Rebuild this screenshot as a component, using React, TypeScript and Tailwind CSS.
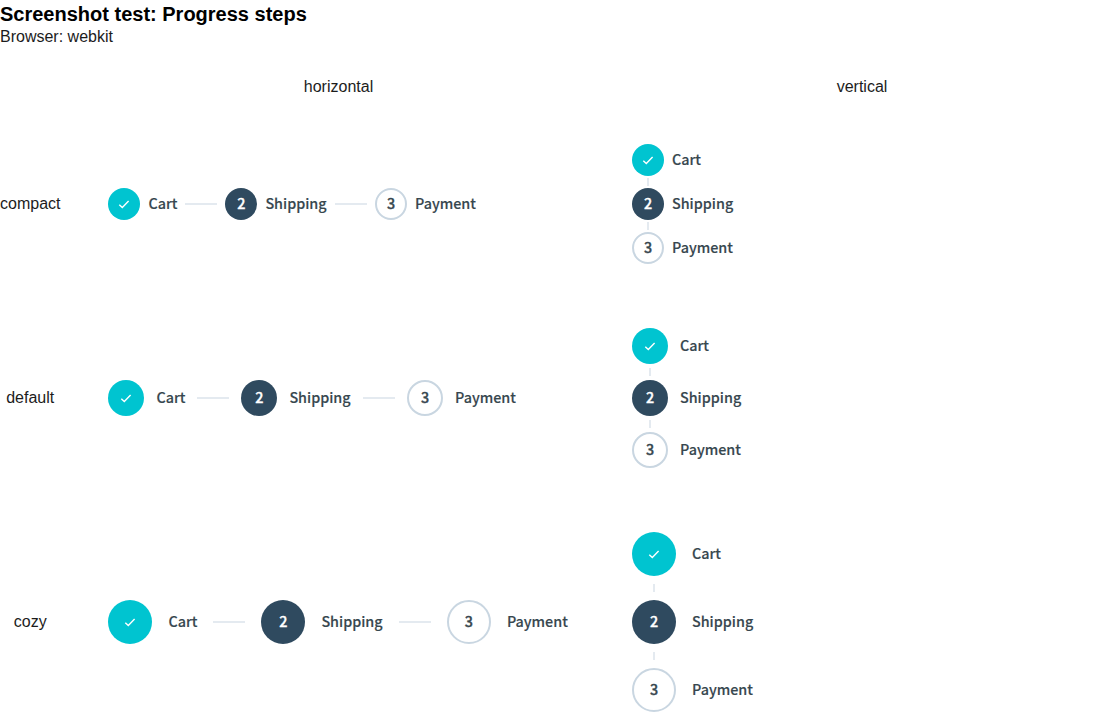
import { Fragment } from "react";

type Size = "compact" | "default" | "cozy";

const sizes: Record<Size, { circle: string; gap: string; connector: string; row: string }> = {
  compact: { circle: "size-8", gap: "gap-2", connector: "w-8 my-0.5", row: "h-[120px]" },
  default: { circle: "size-9", gap: "gap-3", connector: "w-9 my-1", row: "h-[140px]" },
  cozy: { circle: "size-11", gap: "gap-4", connector: "w-11 my-2", row: "h-[180px]" },
};

const steps = [
  { label: "Cart", width: "w-[29px]" },
  { label: "Shipping", width: "w-[61.6px]" },
  { label: "Payment", width: "w-[61.6px]" },
];

const tones = [
  "bg-[#00c4d0] text-white",
  "bg-[#2f4a5f] text-white",
  "border-2 border-[#c9d6e1] bg-white text-[#37474f]",
];

const stepFont =
  "font-['Noto_Sans_CJK_SC',sans-serif] text-[14.35px] leading-6 font-medium [-webkit-text-stroke:0.15px_currentColor]";

function Marker({ index, size }: { index: number; size: Size }) {
  return (
    <div className={`flex shrink-0 items-center justify-center rounded-full ${stepFont} ${sizes[size].circle} ${tones[index]}`}>
      {index === 0 ? (
        <svg viewBox="0 0 16 16" className="size-4" fill="none" stroke="currentColor" strokeWidth="1.4">
          <path d="M3.3 8.7 6.3 11.6 12.6 5" />
        </svg>
      ) : (
        <span className="pb-0.5 [-webkit-text-stroke:0.35px_currentColor]">{index + 1}</span>
      )}
    </div>
  );
}

function Label({ index }: { index: number }) {
  return (
    <span className={`pb-0.5 whitespace-nowrap text-[#37474f] ${stepFont} ${steps[index].width}`}>
      {steps[index].label}
    </span>
  );
}

function HorizontalSteps({ size }: { size: Size }) {
  return (
    <div className={`flex items-center ${sizes[size].gap}`}>
      {steps.map((step, i) => (
        <Fragment key={step.label}>
          {i > 0 && <div className="h-0.5 w-8 shrink-0 bg-[#e4eaf0]" />}
          <Marker index={i} size={size} />
          <Label index={i} />
        </Fragment>
      ))}
    </div>
  );
}

function VerticalSteps({ size }: { size: Size }) {
  return (
    <div className="flex flex-col">
      {steps.map((step, i) => (
        <Fragment key={step.label}>
          {i > 0 && (
            <div className={`flex h-2 justify-center ${sizes[size].connector}`}>
              <div className="w-0.5 bg-[#e4eaf0]" />
            </div>
          )}
          <div className={`flex items-center ${sizes[size].gap}`}>
            <Marker index={i} size={size} />
            <Label index={i} />
          </div>
        </Fragment>
      ))}
    </div>
  );
}

export default function App() {
  return (
    <main className="h-[728px] w-[1109px] overflow-hidden bg-white font-['Liberation_Sans',sans-serif] text-base text-[#1c1c1c]">
      <h1 className="pt-[3px] text-[20px] leading-[23px] font-bold text-black">Screenshot test: Progress steps</h1>
      <p className="leading-[22px]">Browser: webkit</p>
      <div className="mt-[30px] grid grid-cols-[60.5px_460px_460px] text-center">
        <div className="col-start-2 ml-12 w-[460px] leading-[18px]">horizontal</div>
        <div className="ml-[111.5px] w-[460px] leading-[18px]">vertical</div>
      </div>
      <div className="mt-12 flex flex-col gap-16">
        {(["compact", "default", "cozy"] as Size[]).map((size) => (
          <div key={size} className={`flex items-center ${sizes[size].row}`}>
            <div className="w-[60.5px] text-center">{size}</div>
            <div className="ml-[47.9px] w-[460px]">
              <HorizontalSteps size={size} />
            </div>
            <div className="ml-[63.6px] w-[460px]">
              <VerticalSteps size={size} />
            </div>
          </div>
        ))}
      </div>
    </main>
  );
}
